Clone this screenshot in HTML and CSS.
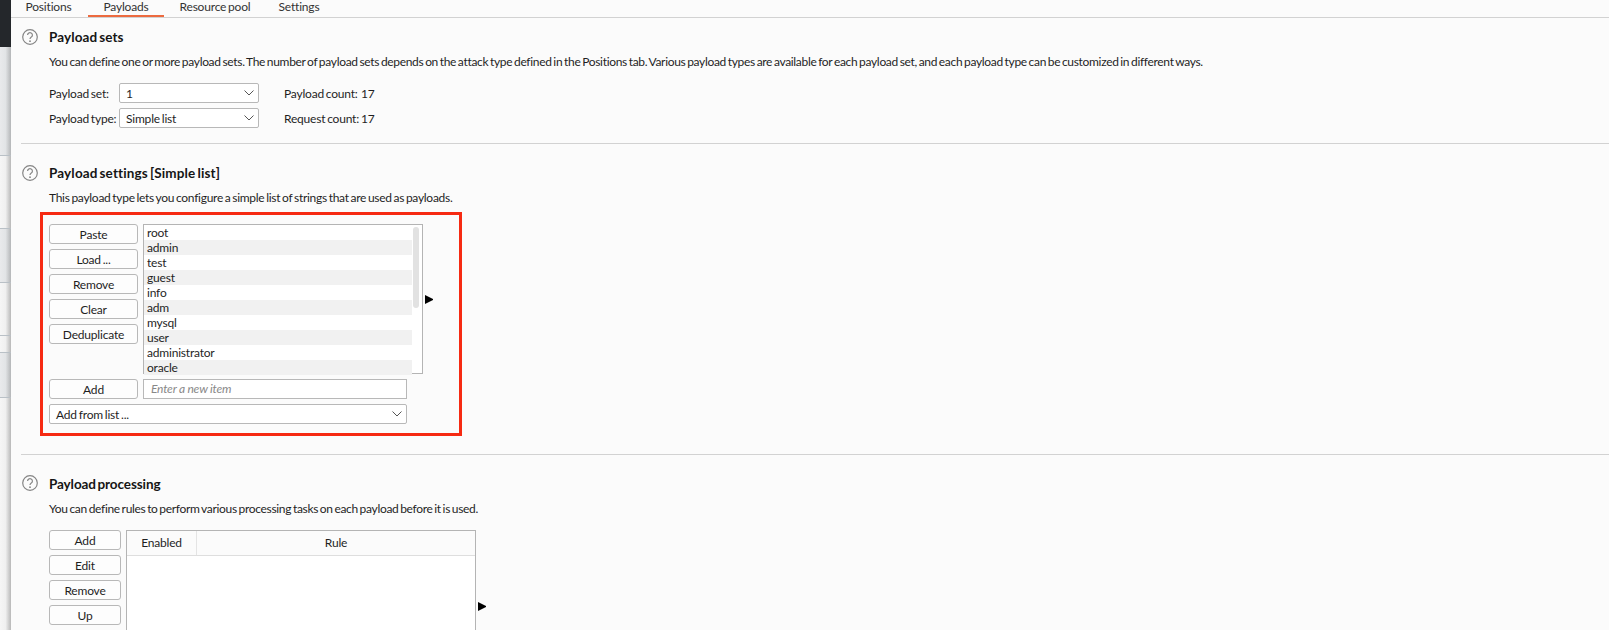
FILE: index.html
```html
<!DOCTYPE html>
<html lang="en">
<head>
<meta charset="utf-8">
<title>Payloads</title>
<link rel="stylesheet" href="styles.css">
</head>
<body>
<div class="app">
  <aside class="rail">
    <div class="rail-top"></div>
    <div class="rail-row h109 shade"></div>
    <div class="rail-row h73"></div>
    <div class="rail-row h54 shade"></div>
    <div class="rail-row h53"></div>
    <div class="rail-row h17"></div>
    <div class="rail-row h45 shade"></div>
    <div class="rail-row last"></div>
  </aside>
  <main class="main">
    <nav class="tabs">
      <span class="tab t-pos">Positions</span>
      <span class="tab t-pay active">Payloads</span>
      <span class="tab t-res">Resource pool</span>
      <span class="tab t-set">Settings</span>
    </nav>

    <section class="section s1">
      <svg class="help" viewBox="0 0 16 16"><circle cx="8" cy="8" r="7.3"/><path d="M5.6 6.1a2.4 2.4 0 1 1 3.7 2c-.9.6-1.3 1-1.3 2"/><circle class="dot" cx="8" cy="12.2" r=".9"/></svg>
      <div class="body">
        <h2>Payload sets</h2>
        <p class="desc">You can define one or more payload sets. The number of payload sets depends on the attack type defined in the Positions tab. Various payload types are available for each payload set, and each payload type can be customized in different ways.</p>
        <div class="form-row fr1">
          <label>Payload set:</label>
          <div class="select sel-s"><span>1</span><svg class="chev" viewBox="0 0 10 6"><path d="M.5.5 5 5 9.5.5"/></svg></div>
          <span class="count">Payload count:</span><span>17</span>
        </div>
        <div class="form-row">
          <label>Payload type:</label>
          <div class="select sel-s"><span>Simple list</span><svg class="chev" viewBox="0 0 10 6"><path d="M.5.5 5 5 9.5.5"/></svg></div>
          <span class="count">Request count:</span><span>17</span>
        </div>
      </div>
    </section>

    <section class="section s2">
      <svg class="help" viewBox="0 0 16 16"><circle cx="8" cy="8" r="7.3"/><path d="M5.6 6.1a2.4 2.4 0 1 1 3.7 2c-.9.6-1.3 1-1.3 2"/><circle class="dot" cx="8" cy="12.2" r=".9"/></svg>
      <div class="body">
        <h2>Payload settings [Simple list]</h2>
        <p class="desc">This payload type lets you configure a simple list of strings that are used as payloads.</p>
        <div class="redbox">
          <div class="list-row">
            <div class="btns btns-a">
              <button>Paste</button>
              <button>Load ...</button>
              <button>Remove</button>
              <button>Clear</button>
              <button>Deduplicate</button>
            </div>
            <div class="listbox">
              <ul>
                <li>root</li><li>admin</li><li>test</li><li>guest</li><li>info</li><li>adm</li><li>mysql</li><li>user</li><li>administrator</li><li>oracle</li>
              </ul>
              <div class="thumb"></div>
            </div>
            <span class="arrow a1"></span>
          </div>
          <div class="add-row">
            <button>Add</button>
            <div class="input">Enter a new item</div>
          </div>
          <div class="select sel-l"><span>Add from list ...</span><svg class="chev" viewBox="0 0 10 6"><path d="M.5.5 5 5 9.5.5"/></svg></div>
        </div>
      </div>
    </section>

    <section class="section s3">
      <svg class="help" viewBox="0 0 16 16"><circle cx="8" cy="8" r="7.3"/><path d="M5.6 6.1a2.4 2.4 0 1 1 3.7 2c-.9.6-1.3 1-1.3 2"/><circle class="dot" cx="8" cy="12.2" r=".9"/></svg>
      <div class="body">
        <h2>Payload processing</h2>
        <p class="desc">You can define rules to perform various processing tasks on each payload before it is used.</p>
        <div class="rules">
          <div class="btns btns-b">
            <button>Add</button>
            <button>Edit</button>
            <button>Remove</button>
            <button>Up</button>
          </div>
          <div class="table">
            <div class="thead"><span class="th-en">Enabled</span><span class="th-rule">Rule</span></div>
          </div>
          <span class="arrow a2"></span>
        </div>
      </div>
    </section>
  </main>
</div>
</body>
</html>
```
FILE: styles.css
```css
* { box-sizing: border-box; }
html, body { margin: 0; height: 630px; overflow: hidden; }
body { font-family: Lato, "Noto Sans", sans-serif; font-size: 12px; letter-spacing: -.2px; word-spacing: -1px; color: #1f1f1f; background: #fbfbfb; }
.app { display: flex; height: 630px; overflow: hidden; }
.rail { width: 11px; flex: none; display: flex; flex-direction: column; }
.rail-top { height: 47px; background: #24272b; flex: none; }
.rail-row { flex: none; border-bottom: 1px solid #b9c0c6; background: linear-gradient(to right, #f6f6f6 0, #f0f0f0 50%, #b8b8b8 100%); }
.rail-row.shade { background: linear-gradient(to right, #e9eaec 0, #e2e4e6 50%, #b4b6b8 100%); }
.h109 { height: 109px; }
.h73 { height: 73px; }
.h54 { height: 54px; }
.h53 { height: 53px; }
.h17 { height: 17px; }
.h45 { height: 45px; }
.rail-row.last { flex: 1; border-bottom: 0; }
.main { flex: 1; min-width: 0; background: #fbfbfb; }
.tabs { display: flex; height: 18px; border-bottom: 1px solid #d2d2d2; color: #333; }
.tab { height: 17px; line-height: 13px; text-align: center; white-space: nowrap; }
.t-pos { width: 75px; margin-right: 2px; }
.t-pay { width: 76px; }
.t-pay.active { border-bottom: 2px solid #ec6a3f; }
.t-res { width: 98px; margin-left: 2px; }
.t-set { width: 70px; }
.section { display: flex; padding-left: 11px; position: relative; }
.help { width: 16px; height: 16px; flex: none; margin: 1px 11px 0 0; fill: none; stroke: #858585; stroke-width: 1.2; }
.help .dot { fill: #858585; stroke: none; }
.s1 { padding-top: 10px; height: 126px; }
.s2 { padding-top: 20px; height: 311px; }
.s3 { padding-top: 20px; }
.s3 .help { margin-top: 0; }
.section + .section::before { content: ""; position: absolute; top: -1px; left: 10px; right: 0; height: 1px; background: #d2d2d2; }
.body { flex: 1; min-width: 0; }
h2 { margin: 1px 0 0; font-size: 13.5px; font-weight: 700; line-height: 16px; letter-spacing: .1px; word-spacing: -1.5px; color: #151515; }
.s2 h2 { letter-spacing: .15px; }
.s3 h2 { letter-spacing: -.1px; }
.desc { margin: 10px 0 0; line-height: 14px; white-space: nowrap; }
.s1 .desc { letter-spacing: -.32px; }
.s2 .desc { letter-spacing: -.28px; }
.s3 .desc { letter-spacing: -.32px; }
.form-row { display: flex; align-items: center; height: 20px; margin-top: 5px; white-space: nowrap; }
.fr1 { margin-top: 14px; }
.form-row label { width: 70px; }
.select { display: flex; align-items: center; justify-content: space-between; height: 20px; background: #fff; border: 1px solid #b8b8b8; border-radius: 2px; padding: 0 4px 0 6px; }
.sel-s { width: 140px; }
.sel-l { width: 358px; margin-top: 5px; }
.chev { width: 10px; height: 6px; fill: none; stroke: #555; stroke-width: 1; }
.count { margin-left: 25px; width: 77px; }
.redbox { width: 422px; height: 224px; margin: 7px 0 0 -9px; border: 3px solid #f62a12; padding: 9px 6px 0; }
.list-row { display: flex; }
.btns { display: flex; flex-direction: column; gap: 5px; flex: none; }
button { display: block; height: 20px; padding: 0; font: inherit; letter-spacing: inherit; word-spacing: inherit; color: inherit; background: #fdfdfd; border: 1px solid #b8b8b8; border-radius: 3px; }
.btns-a { width: 89px; }
.btns-b { width: 72px; }
.listbox { margin-left: 5px; width: 280px; height: 150px; background: #fff; border: 1px solid #b4b4b4; position: relative; }
ul { list-style: none; margin: 0; padding: 0; }
li { height: 15px; line-height: 15px; padding-left: 3px; width: 268px; }
li:nth-child(even) { background: #f1f1f1; }
.thumb { position: absolute; top: 2px; right: 3px; width: 6px; height: 81px; background: #e2e2e2; border-radius: 3px; }
.arrow { flex: none; width: 8px; height: 9px; margin-left: 2px; border-left: 8px solid #000; border-top: 4.5px solid transparent; border-bottom: 4.5px solid transparent; }
.a1 { margin-top: 71px; }
.a2 { margin-top: 72px; }
.add-row { display: flex; margin-top: 5px; }
.add-row button { width: 89px; }
.input { margin-left: 5px; width: 264px; height: 20px; line-height: 18px; padding-left: 7px; background: #fff; border: 1px solid #b8b8b8; color: #888; font-style: italic; word-spacing: 0; }
.rules { display: flex; margin-top: 14px; }
.table { margin-left: 5px; width: 350px; height: 140px; background: #fff; border: 1px solid #b4b4b4; }
.thead { display: flex; height: 25px; line-height: 24px; background: #fbfbfb; border-bottom: 1px solid #dedede; text-align: center; }
.th-en { width: 70px; border-right: 1px solid #e4e4e4; }
.th-rule { flex: 1; }
```
